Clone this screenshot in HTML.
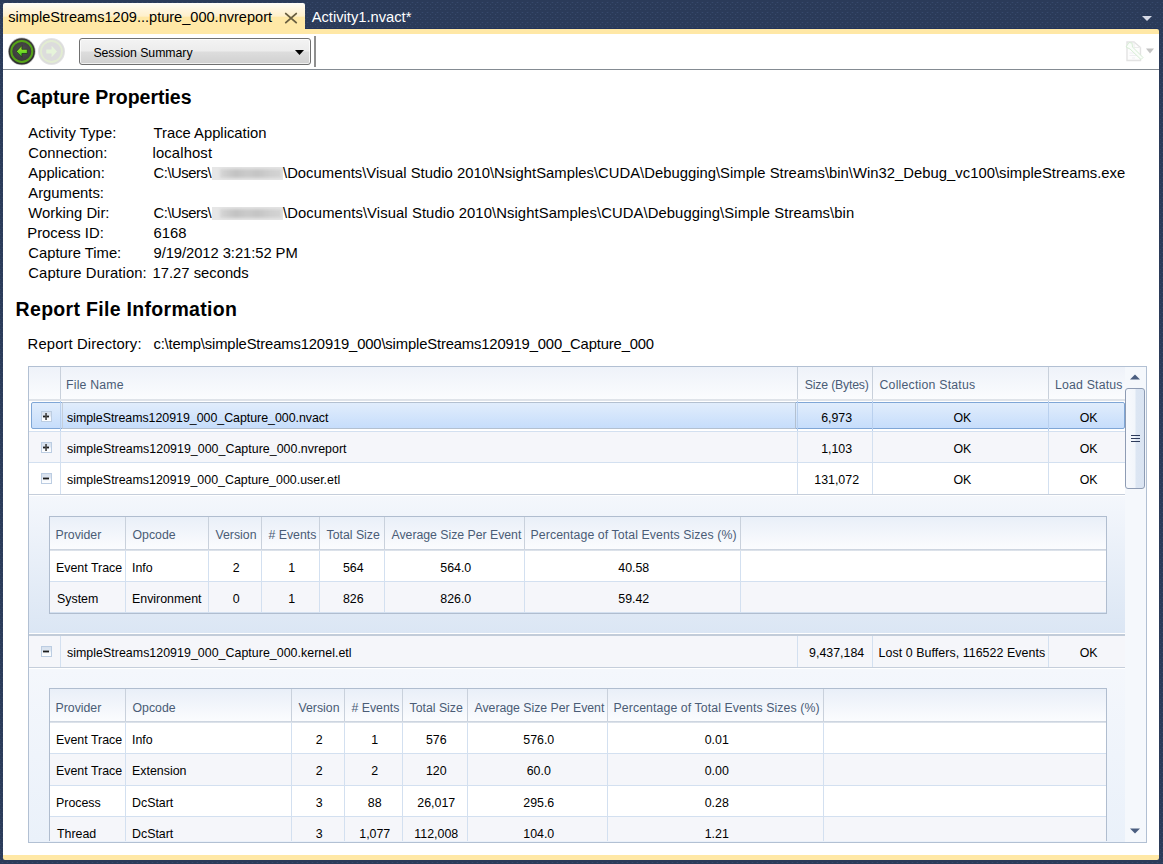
<!DOCTYPE html><html><head><meta charset="utf-8"><style>
*{margin:0;padding:0;box-sizing:border-box}
html,body{width:1163px;height:864px;overflow:hidden}
body{position:relative;font-family:"Liberation Sans",sans-serif;
background-color:#2c3c5b}
.t{position:absolute;white-space:nowrap;line-height:1}
.r{position:absolute}
</style></head><body>
<svg class="r" style="left:0;top:0" width="1163" height="864"><defs><pattern id="nv" x="0" y="0" width="5" height="5" patternUnits="userSpaceOnUse"><rect width="5" height="5" fill="#2b3b59"/><rect x="2" y="2" width="1" height="1" fill="#37496b"/><rect x="0" y="4" width="1" height="1" fill="#37496b"/><rect x="1" y="2" width="1" height="1" fill="#2e3e5e"/><rect x="3" y="2" width="1" height="1" fill="#2e3e5e"/></pattern></defs><rect width="1163" height="864" fill="url(#nv)"/></svg>
<div class="r" style="left:3px;top:28px;width:1156px;height:1px;background:#233459"></div>
<div class="r" style="left:3px;top:3px;width:302px;height:27px;border-radius:2px 2px 0 0;background:linear-gradient(#fffdf7 0px,#fff6e0 6px,#fff0cc 13px,#ffe8a6 14.5px,#ffe8a6 27px)"></div>
<div class="r" style="left:3px;top:29px;width:1156px;height:6px;background:#ffe8a6;border-radius:0 2px 0 0"></div>
<div class="t" style="left:8.25px;top:9.92px;font-size:14.55px;color:#000;letter-spacing:0.005px;">simpleStreams1209...pture_000.nvreport</div>
<svg class="r" style="left:284px;top:12px" width="14" height="12" viewBox="0 0 14 12"><path d="M1.8 1.6 L12.2 10.6 M12.2 1.6 L1.8 10.6" stroke="#6a5f40" stroke-width="1.9" stroke-linecap="round"/></svg>
<div class="t" style="left:311.70px;top:9.75px;font-size:14.75px;color:#fff;letter-spacing:-0.018px;">Activity1.nvact*</div>
<svg class="r" style="left:1141px;top:15px" width="12" height="7"><path d="M1 1 L11 1 L6 6 Z" fill="#d6dae6"/></svg>
<div class="r" style="left:3px;top:34px;width:1156px;height:821px;background:#fff"></div>
<div class="r" style="left:3px;top:855px;width:1156px;height:5px;background:#ffe8a6;border-radius:0 0 2px 2px"></div>
<div class="r" style="left:3px;top:69px;width:1156px;height:1px;background:#848b92"></div>
<svg class="r" style="left:7px;top:37px" width="30" height="30" viewBox="0 0 30 30">
<defs><radialGradient id="bg1" cx="50%" cy="45%" r="55%"><stop offset="0" stop-color="#505050"/><stop offset="0.75" stop-color="#3a3a3a"/><stop offset="1" stop-color="#2c2c2c"/></radialGradient>
<linearGradient id="ar1" x1="0" y1="0" x2="0" y2="1"><stop offset="0" stop-color="#b6ee30"/><stop offset="1" stop-color="#30c41c"/></linearGradient></defs>
<circle cx="14.8" cy="14.4" r="13.8" fill="#6a6a6a" opacity="0.45"/>
<circle cx="14.8" cy="14.4" r="13.1" fill="url(#bg1)"/>
<circle cx="14.8" cy="14.4" r="10.5" fill="none" stroke="#55a317" stroke-width="2"/>
<path d="M9.4 14.4 L14.9 8.6 L14.9 12.3 L20.3 12.3 L20.3 16.5 L14.9 16.5 L14.9 20.2 Z" fill="url(#ar1)" stroke="#183414" stroke-width="0.7"/>
</svg>
<svg class="r" style="left:37px;top:37px" width="30" height="30" viewBox="0 0 30 30">
<circle cx="14.5" cy="14.5" r="13.5" fill="#e4e4e4"/>
<circle cx="14.5" cy="14.5" r="12.6" fill="#dcdcdc"/>
<circle cx="14.5" cy="14.5" r="10.5" fill="none" stroke="#e2ecd2" stroke-width="1.8"/>
<path d="M20 14.5 L14.6 8.8 L14.6 12.5 L9.3 12.5 L9.3 16.5 L14.6 16.5 L14.6 20.2 Z" fill="#e6f4da"/>
</svg>
<div class="r" style="left:79px;top:38px;width:232px;height:27px;border:1px solid #707070;border-radius:3px;background:linear-gradient(#f3f3f3 0px,#ececec 12px,#dddddd 13px,#d0d0d0 25px);box-shadow:inset 0 0 0 1px rgba(255,255,255,0.7)"></div>
<div class="t" style="left:93.40px;top:46.97px;font-size:12.32px;color:#000;letter-spacing:-0.053px;">Session Summary</div>
<svg class="r" style="left:294px;top:49px" width="12" height="8"><path d="M1 1 L10 1 L5.5 6 Z" fill="#000"/></svg>
<div class="r" style="left:314px;top:36px;width:2px;height:31px;background:#8f8f8f;width:1.5px"></div>
<svg class="r" style="left:1122px;top:38px" width="36" height="26" viewBox="0 0 36 26">
<path d="M5 4 L12 4 L18.5 9.5 L18.5 22.5 L5 22.5 Z" fill="#fdfdfd" stroke="#e3e3e3" stroke-width="1.4"/>
<path d="M12 4 L12 9.5 L18.5 9.5" fill="none" stroke="#ececec" stroke-width="1"/>
<path d="M7.5 15 L13 15 M7.5 17.5 L15 17.5 M10 20 L13 20" stroke="#efeff3" stroke-width="1"/>
<path d="M4 9 L7 4.5 L10 5 L10.5 9 L21 19.5 L19 21.5 L8 11 Z" fill="#fafdfa" stroke="#d7edd5" stroke-width="1"/>
<path d="M24 10.5 L32 10.5 L28 15.5 Z" fill="#c2c2c2"/>
</svg>
<div class="t" style="left:16.20px;top:88.01px;font-size:19.5px;color:#000;font-weight:bold;letter-spacing:-0.012px;">Capture Properties</div>
<div class="t" style="left:28.30px;top:125.71px;font-size:14.8px;color:#000;letter-spacing:0.088px;">Activity Type:</div>
<div class="t" style="left:153.50px;top:125.71px;font-size:14.8px;color:#000;letter-spacing:-0.003px;">Trace Application</div>
<div class="t" style="left:28.30px;top:145.71px;font-size:14.8px;color:#000;">Connection:</div>
<div class="t" style="left:152.50px;top:145.71px;font-size:14.8px;color:#000;letter-spacing:0.139px;">localhost</div>
<div class="t" style="left:28.30px;top:165.71px;font-size:14.8px;color:#000;">Application:</div>
<div class="t" style="left:153.50px;top:165.71px;font-size:14.8px;color:#000;letter-spacing:-0.443px;">C:\Users\</div>
<div class="r" style="left:212px;top:167.2px;width:71px;height:12.5px;overflow:hidden;background:#e6e6e6"><div class="r" style="left:8px;top:2px;width:62px;height:9px;background:linear-gradient(90deg,#d6d6d6,#c2c2c2 25%,#cacaca 45%,#c4c4c4 60%,#cecece 80%,#d4d4d4);filter:blur(1.5px)"></div></div>
<div class="t" style="left:283.00px;top:165.71px;font-size:14.8px;color:#000;letter-spacing:0.025px;">\Documents\Visual Studio 2010\NsightSamples\CUDA\Debugging\Simple Streams\bin\Win32_Debug_vc100\simpleStreams.exe</div>
<div class="t" style="left:28.30px;top:185.71px;font-size:14.8px;color:#000;">Arguments:</div>
<div class="t" style="left:28.30px;top:205.71px;font-size:14.8px;color:#000;">Working Dir:</div>
<div class="t" style="left:153.50px;top:205.71px;font-size:14.8px;color:#000;letter-spacing:-0.443px;">C:\Users\</div>
<div class="r" style="left:212px;top:207.2px;width:71px;height:12.5px;overflow:hidden;background:#e6e6e6"><div class="r" style="left:8px;top:2px;width:62px;height:9px;background:linear-gradient(90deg,#d6d6d6,#c2c2c2 25%,#cacaca 45%,#c4c4c4 60%,#cecece 80%,#d4d4d4);filter:blur(1.5px)"></div></div>
<div class="t" style="left:283.00px;top:205.71px;font-size:14.8px;color:#000;letter-spacing:0.096px;">\Documents\Visual Studio 2010\NsightSamples\CUDA\Debugging\Simple Streams\bin</div>
<div class="t" style="left:27.30px;top:225.71px;font-size:14.8px;color:#000;">Process ID:</div>
<div class="t" style="left:153.50px;top:225.71px;font-size:14.8px;color:#000;">6168</div>
<div class="t" style="left:28.30px;top:245.71px;font-size:14.8px;color:#000;">Capture Time:</div>
<div class="t" style="left:153.50px;top:245.71px;font-size:14.8px;color:#000;letter-spacing:-0.073px;">9/19/2012 3:21:52 PM</div>
<div class="t" style="left:28.30px;top:265.71px;font-size:14.8px;color:#000;letter-spacing:0.101px;">Capture Duration:</div>
<div class="t" style="left:152.50px;top:265.71px;font-size:14.8px;color:#000;">17.27 seconds</div>
<div class="t" style="left:15.60px;top:300.01px;font-size:19.5px;color:#000;font-weight:bold;letter-spacing:0.310px;">Report File Information</div>
<div class="t" style="left:27.60px;top:336.51px;font-size:14.8px;color:#000;letter-spacing:0.130px;">Report Directory:</div>
<div class="t" style="left:153.40px;top:336.51px;font-size:14.8px;color:#000;letter-spacing:-0.153px;">c:\temp\simpleStreams120919_000\simpleStreams120919_000_Capture_000</div>
<div class="r" style="left:28px;top:366px;width:1119px;height:477px;border:1px solid #b2c0d3;background:#f5f8fc"></div>
<div class="r" style="left:29px;top:367px;width:1096px;height:32px;background:linear-gradient(#eef2f9,#fbfcfe)"></div>
<div class="r" style="left:29px;top:399px;width:1096px;height:2px;background:#dfe3e9"></div>
<div class="r" style="left:60px;top:367px;width:1px;height:32px;background:#c8d0db"></div>
<div class="r" style="left:797px;top:367px;width:1px;height:32px;background:#c8d0db"></div>
<div class="r" style="left:872px;top:367px;width:1px;height:32px;background:#c8d0db"></div>
<div class="r" style="left:1048px;top:367px;width:1px;height:32px;background:#c8d0db"></div>
<div class="t" style="left:66.10px;top:378.78px;font-size:12.3px;color:#4a5c76;letter-spacing:0.176px;">File Name</div>
<div class="t" style="left:804.80px;top:378.78px;font-size:12.3px;color:#4a5c76;letter-spacing:-0.199px;">Size (Bytes)</div>
<div class="t" style="left:879.50px;top:378.78px;font-size:12.3px;color:#4a5c76;letter-spacing:0.211px;">Collection Status</div>
<div class="t" style="left:1055.00px;top:378.78px;font-size:12.3px;color:#4a5c76;letter-spacing:0.181px;">Load Status</div>
<div class="r" style="left:29px;top:401px;width:1096px;height:30px;background:#ffffff"></div>
<div class="r" style="left:29px;top:431px;width:1096px;height:1px;background:#d3e0f0"></div>
<div class="r" style="left:31px;top:402px;width:1094px;height:27px;border:1px solid #7fa6d6;border-radius:2px;background:linear-gradient(#e1edfc,#c6ddfb)"></div>
<div class="r" style="left:62px;top:402px;width:734px;height:27px;border:1px solid #b3c0d0;border-left-color:#c5ced9;background:linear-gradient(#e1edfc,#c6ddfb)"></div>
<div class="r" style="left:60px;top:401px;width:1px;height:30px;background:#b9d0ee"></div>
<div class="r" style="left:797px;top:401px;width:1px;height:30px;background:#b9d0ee"></div>
<div class="r" style="left:872px;top:401px;width:1px;height:30px;background:#b9d0ee"></div>
<div class="r" style="left:1048px;top:401px;width:1px;height:30px;background:#b9d0ee"></div>
<div class="t" style="left:67.00px;top:411.70px;font-size:12.4px;color:#000;letter-spacing:-0.025px;">simpleStreams120919_000_Capture_000.nvact</div>
<div class="t" style="left:821.14px;top:411.70px;font-size:12.4px;color:#000;">6,973</div>
<div class="t" style="left:953.48px;top:411.70px;font-size:12.4px;color:#000;">OK</div>
<div class="t" style="left:1079.68px;top:411.70px;font-size:12.4px;color:#000;">OK</div>
<svg class="r" style="left:41px;top:411px" width="11" height="11" viewBox="0 0 11 11"><defs><linearGradient id="eg" x1="0" y1="0" x2="0" y2="1"><stop offset="0" stop-color="#d6e0ed"/><stop offset="0.45" stop-color="#dfe7f2"/><stop offset="0.55" stop-color="#f3f7fc"/><stop offset="1" stop-color="#ffffff"/></linearGradient></defs><rect x="0.5" y="0.5" width="10" height="10" fill="url(#eg)" stroke="#bccde2" stroke-width="1"/><rect x="2" y="4.6" width="6" height="1.8" fill="#1c1c1c"/><rect x="4.2" y="2" width="1.7" height="7" fill="#4a4a4a"/></svg>
<div class="r" style="left:29px;top:432px;width:1096px;height:30px;background:#f5f6fa"></div>
<div class="r" style="left:29px;top:462px;width:1096px;height:1px;background:#d3e0f0"></div>
<div class="r" style="left:60px;top:432px;width:1px;height:30px;background:#d3e0f0"></div>
<div class="r" style="left:797px;top:432px;width:1px;height:30px;background:#d3e0f0"></div>
<div class="r" style="left:872px;top:432px;width:1px;height:30px;background:#d3e0f0"></div>
<div class="r" style="left:1048px;top:432px;width:1px;height:30px;background:#d3e0f0"></div>
<div class="t" style="left:67.00px;top:442.70px;font-size:12.4px;color:#000;letter-spacing:0.029px;">simpleStreams120919_000_Capture_000.nvreport</div>
<div class="t" style="left:821.14px;top:442.70px;font-size:12.4px;color:#000;">1,103</div>
<div class="t" style="left:953.48px;top:442.70px;font-size:12.4px;color:#000;">OK</div>
<div class="t" style="left:1079.68px;top:442.70px;font-size:12.4px;color:#000;">OK</div>
<svg class="r" style="left:41px;top:442px" width="11" height="11" viewBox="0 0 11 11"><defs><linearGradient id="eg" x1="0" y1="0" x2="0" y2="1"><stop offset="0" stop-color="#d6e0ed"/><stop offset="0.45" stop-color="#dfe7f2"/><stop offset="0.55" stop-color="#f3f7fc"/><stop offset="1" stop-color="#ffffff"/></linearGradient></defs><rect x="0.5" y="0.5" width="10" height="10" fill="url(#eg)" stroke="#bccde2" stroke-width="1"/><rect x="2" y="4.6" width="6" height="1.8" fill="#1c1c1c"/><rect x="4.2" y="2" width="1.7" height="7" fill="#4a4a4a"/></svg>
<div class="r" style="left:29px;top:463px;width:1096px;height:31px;background:#ffffff"></div>
<div class="r" style="left:29px;top:494px;width:1096px;height:1px;background:#c5cedb"></div>
<div class="r" style="left:60px;top:463px;width:1px;height:31px;background:#d3e0f0"></div>
<div class="r" style="left:797px;top:463px;width:1px;height:31px;background:#d3e0f0"></div>
<div class="r" style="left:872px;top:463px;width:1px;height:31px;background:#d3e0f0"></div>
<div class="r" style="left:1048px;top:463px;width:1px;height:31px;background:#d3e0f0"></div>
<div class="t" style="left:67.00px;top:473.70px;font-size:12.4px;color:#000;letter-spacing:0.009px;">simpleStreams120919_000_Capture_000.user.etl</div>
<div class="t" style="left:814.25px;top:473.70px;font-size:12.4px;color:#000;">131,072</div>
<div class="t" style="left:953.48px;top:473.70px;font-size:12.4px;color:#000;">OK</div>
<div class="t" style="left:1079.68px;top:473.70px;font-size:12.4px;color:#000;">OK</div>
<svg class="r" style="left:41px;top:473px" width="11" height="11" viewBox="0 0 11 11"><defs><linearGradient id="eg" x1="0" y1="0" x2="0" y2="1"><stop offset="0" stop-color="#d6e0ed"/><stop offset="0.45" stop-color="#dfe7f2"/><stop offset="0.55" stop-color="#f3f7fc"/><stop offset="1" stop-color="#ffffff"/></linearGradient></defs><rect x="0.5" y="0.5" width="10" height="10" fill="url(#eg)" stroke="#bccde2" stroke-width="1"/><rect x="2" y="4.6" width="6" height="1.8" fill="#1c1c1c"/></svg>
<div class="r" style="left:29px;top:495px;width:1096px;height:1px;background:#ffffff"></div>
<div class="r" style="left:29px;top:496px;width:1096px;height:137px;background:linear-gradient(#f4f7fc,#dbe6f4)"></div>
<div class="r" style="left:29px;top:633px;width:1096px;height:1px;background:#ffffff"></div>
<div class="r" style="left:29px;top:634px;width:1096px;height:2px;background:#c2ccd9"></div>
<div class="r" style="left:49px;top:516px;width:1058px;height:98px;border:1px solid #b0bdcf;background:#fff;"></div>
<div class="r" style="left:50px;top:517px;width:1056px;height:32px;background:linear-gradient(#e9eff8,#fbfcfe)"></div>
<div class="r" style="left:50px;top:549px;width:1056px;height:2px;background:linear-gradient(#c6cfdb,#e3e8ee)"></div>
<div class="r" style="left:125px;top:517px;width:1px;height:32px;background:#c9d1dc"></div>
<div class="r" style="left:208px;top:517px;width:1px;height:32px;background:#c9d1dc"></div>
<div class="r" style="left:261px;top:517px;width:1px;height:32px;background:#c9d1dc"></div>
<div class="r" style="left:319px;top:517px;width:1px;height:32px;background:#c9d1dc"></div>
<div class="r" style="left:384px;top:517px;width:1px;height:32px;background:#c9d1dc"></div>
<div class="r" style="left:524px;top:517px;width:1px;height:32px;background:#c9d1dc"></div>
<div class="r" style="left:740px;top:517px;width:1px;height:32px;background:#c9d1dc"></div>
<div class="t" style="left:55.50px;top:528.58px;font-size:12.3px;color:#4a5c76;">Provider</div>
<div class="t" style="left:132.50px;top:528.58px;font-size:12.3px;color:#4a5c76;">Opcode</div>
<div class="t" style="left:215.50px;top:528.58px;font-size:12.3px;color:#4a5c76;">Version</div>
<div class="t" style="left:268.50px;top:528.58px;font-size:12.3px;color:#4a5c76;"># Events</div>
<div class="t" style="left:326.50px;top:528.58px;font-size:12.3px;color:#4a5c76;">Total Size</div>
<div class="t" style="left:391.50px;top:528.58px;font-size:12.3px;color:#4a5c76;letter-spacing:-0.024px;">Average Size Per Event</div>
<div class="t" style="left:530.50px;top:528.58px;font-size:12.3px;color:#4a5c76;letter-spacing:0.094px;">Percentage of Total Events Sizes (%)</div>
<div class="r" style="left:50px;top:551px;width:1056px;height:30px;background:#ffffff"></div>
<div class="r" style="left:50px;top:581px;width:1056px;height:1px;background:#d3e0f0"></div>
<div class="r" style="left:125px;top:551px;width:1px;height:31px;background:#d3e0f0"></div>
<div class="r" style="left:208px;top:551px;width:1px;height:31px;background:#d3e0f0"></div>
<div class="r" style="left:261px;top:551px;width:1px;height:31px;background:#d3e0f0"></div>
<div class="r" style="left:319px;top:551px;width:1px;height:31px;background:#d3e0f0"></div>
<div class="r" style="left:384px;top:551px;width:1px;height:31px;background:#d3e0f0"></div>
<div class="r" style="left:524px;top:551px;width:1px;height:31px;background:#d3e0f0"></div>
<div class="r" style="left:740px;top:551px;width:1px;height:31px;background:#d3e0f0"></div>
<div class="t" style="left:56.00px;top:561.70px;font-size:12.4px;color:#000;">Event Trace</div>
<div class="t" style="left:132.00px;top:561.70px;font-size:12.4px;color:#000;">Info</div>
<div class="t" style="left:232.80px;top:561.70px;font-size:12.4px;color:#000;">2</div>
<div class="t" style="left:288.30px;top:561.70px;font-size:12.4px;color:#000;">1</div>
<div class="t" style="left:342.91px;top:561.70px;font-size:12.4px;color:#000;">564</div>
<div class="t" style="left:440.24px;top:561.70px;font-size:12.4px;color:#000;">564.0</div>
<div class="t" style="left:618.24px;top:561.70px;font-size:12.4px;color:#000;">40.58</div>
<div class="r" style="left:50px;top:582px;width:1056px;height:30px;background:#f5f6fa"></div>
<div class="r" style="left:50px;top:612px;width:1056px;height:1px;background:#d3e0f0"></div>
<div class="r" style="left:125px;top:582px;width:1px;height:31px;background:#d3e0f0"></div>
<div class="r" style="left:208px;top:582px;width:1px;height:31px;background:#d3e0f0"></div>
<div class="r" style="left:261px;top:582px;width:1px;height:31px;background:#d3e0f0"></div>
<div class="r" style="left:319px;top:582px;width:1px;height:31px;background:#d3e0f0"></div>
<div class="r" style="left:384px;top:582px;width:1px;height:31px;background:#d3e0f0"></div>
<div class="r" style="left:524px;top:582px;width:1px;height:31px;background:#d3e0f0"></div>
<div class="r" style="left:740px;top:582px;width:1px;height:31px;background:#d3e0f0"></div>
<div class="t" style="left:57.00px;top:592.70px;font-size:12.4px;color:#000;">System</div>
<div class="t" style="left:132.00px;top:592.70px;font-size:12.4px;color:#000;">Environment</div>
<div class="t" style="left:232.80px;top:592.70px;font-size:12.4px;color:#000;">0</div>
<div class="t" style="left:288.30px;top:592.70px;font-size:12.4px;color:#000;">1</div>
<div class="t" style="left:342.91px;top:592.70px;font-size:12.4px;color:#000;">826</div>
<div class="t" style="left:440.24px;top:592.70px;font-size:12.4px;color:#000;">826.0</div>
<div class="t" style="left:618.24px;top:592.70px;font-size:12.4px;color:#000;">59.42</div>
<div class="r" style="left:29px;top:636px;width:1096px;height:31px;background:#f5f6fa"></div>
<div class="r" style="left:29px;top:667px;width:1096px;height:1px;background:#c5cedb"></div>
<div class="r" style="left:60px;top:636px;width:1px;height:31px;background:#d3e0f0"></div>
<div class="r" style="left:797px;top:636px;width:1px;height:31px;background:#d3e0f0"></div>
<div class="r" style="left:872px;top:636px;width:1px;height:31px;background:#d3e0f0"></div>
<div class="r" style="left:1048px;top:636px;width:1px;height:31px;background:#d3e0f0"></div>
<div class="t" style="left:67.00px;top:646.70px;font-size:12.4px;color:#000;letter-spacing:0.032px;">simpleStreams120919_000_Capture_000.kernel.etl</div>
<div class="t" style="left:809.08px;top:646.70px;font-size:12.4px;color:#000;">9,437,184</div>
<div class="t" style="left:878.50px;top:646.70px;font-size:12.4px;color:#000;letter-spacing:0.066px;">Lost 0 Buffers, 116522 Events</div>
<div class="t" style="left:1079.68px;top:646.70px;font-size:12.4px;color:#000;">OK</div>
<svg class="r" style="left:41px;top:646px" width="11" height="11" viewBox="0 0 11 11"><defs><linearGradient id="eg" x1="0" y1="0" x2="0" y2="1"><stop offset="0" stop-color="#d6e0ed"/><stop offset="0.45" stop-color="#dfe7f2"/><stop offset="0.55" stop-color="#f3f7fc"/><stop offset="1" stop-color="#ffffff"/></linearGradient></defs><rect x="0.5" y="0.5" width="10" height="10" fill="url(#eg)" stroke="#bccde2" stroke-width="1"/><rect x="2" y="4.6" width="6" height="1.8" fill="#1c1c1c"/></svg>
<div class="r" style="left:29px;top:668px;width:1096px;height:1px;background:#ffffff"></div>
<div class="r" style="left:29px;top:669px;width:1096px;height:173px;background:linear-gradient(#f4f7fc,#eaf1fa)"></div>
<div class="r" style="left:49px;top:688px;width:1058px;height:153px;border:1px solid #b0bdcf;background:#fff;border-bottom:none;"></div>
<div class="r" style="left:50px;top:689px;width:1056px;height:32px;background:linear-gradient(#e9eff8,#fbfcfe)"></div>
<div class="r" style="left:50px;top:721px;width:1056px;height:2px;background:linear-gradient(#c6cfdb,#e3e8ee)"></div>
<div class="r" style="left:125px;top:689px;width:1px;height:32px;background:#c9d1dc"></div>
<div class="r" style="left:291px;top:689px;width:1px;height:32px;background:#c9d1dc"></div>
<div class="r" style="left:344px;top:689px;width:1px;height:32px;background:#c9d1dc"></div>
<div class="r" style="left:402px;top:689px;width:1px;height:32px;background:#c9d1dc"></div>
<div class="r" style="left:467px;top:689px;width:1px;height:32px;background:#c9d1dc"></div>
<div class="r" style="left:607px;top:689px;width:1px;height:32px;background:#c9d1dc"></div>
<div class="r" style="left:823px;top:689px;width:1px;height:32px;background:#c9d1dc"></div>
<div class="t" style="left:55.50px;top:702.28px;font-size:12.3px;color:#4a5c76;">Provider</div>
<div class="t" style="left:132.50px;top:702.28px;font-size:12.3px;color:#4a5c76;">Opcode</div>
<div class="t" style="left:298.50px;top:702.28px;font-size:12.3px;color:#4a5c76;">Version</div>
<div class="t" style="left:351.50px;top:702.28px;font-size:12.3px;color:#4a5c76;"># Events</div>
<div class="t" style="left:409.50px;top:702.28px;font-size:12.3px;color:#4a5c76;">Total Size</div>
<div class="t" style="left:474.50px;top:702.28px;font-size:12.3px;color:#4a5c76;letter-spacing:-0.024px;">Average Size Per Event</div>
<div class="t" style="left:613.50px;top:702.28px;font-size:12.3px;color:#4a5c76;letter-spacing:0.094px;">Percentage of Total Events Sizes (%)</div>
<div class="r" style="left:50px;top:723px;width:1056px;height:30px;background:#ffffff"></div>
<div class="r" style="left:50px;top:753px;width:1056px;height:1px;background:#d3e0f0"></div>
<div class="r" style="left:125px;top:723px;width:1px;height:31px;background:#d3e0f0"></div>
<div class="r" style="left:291px;top:723px;width:1px;height:31px;background:#d3e0f0"></div>
<div class="r" style="left:344px;top:723px;width:1px;height:31px;background:#d3e0f0"></div>
<div class="r" style="left:402px;top:723px;width:1px;height:31px;background:#d3e0f0"></div>
<div class="r" style="left:467px;top:723px;width:1px;height:31px;background:#d3e0f0"></div>
<div class="r" style="left:607px;top:723px;width:1px;height:31px;background:#d3e0f0"></div>
<div class="r" style="left:823px;top:723px;width:1px;height:31px;background:#d3e0f0"></div>
<div class="t" style="left:56.00px;top:733.70px;font-size:12.4px;color:#000;">Event Trace</div>
<div class="t" style="left:132.00px;top:733.70px;font-size:12.4px;color:#000;">Info</div>
<div class="t" style="left:315.80px;top:733.70px;font-size:12.4px;color:#000;">2</div>
<div class="t" style="left:371.30px;top:733.70px;font-size:12.4px;color:#000;">1</div>
<div class="t" style="left:425.91px;top:733.70px;font-size:12.4px;color:#000;">576</div>
<div class="t" style="left:523.24px;top:733.70px;font-size:12.4px;color:#000;">576.0</div>
<div class="t" style="left:704.69px;top:733.70px;font-size:12.4px;color:#000;">0.01</div>
<div class="r" style="left:50px;top:754px;width:1056px;height:31px;background:#f5f6fa"></div>
<div class="r" style="left:50px;top:785px;width:1056px;height:1px;background:#d3e0f0"></div>
<div class="r" style="left:125px;top:754px;width:1px;height:32px;background:#d3e0f0"></div>
<div class="r" style="left:291px;top:754px;width:1px;height:32px;background:#d3e0f0"></div>
<div class="r" style="left:344px;top:754px;width:1px;height:32px;background:#d3e0f0"></div>
<div class="r" style="left:402px;top:754px;width:1px;height:32px;background:#d3e0f0"></div>
<div class="r" style="left:467px;top:754px;width:1px;height:32px;background:#d3e0f0"></div>
<div class="r" style="left:607px;top:754px;width:1px;height:32px;background:#d3e0f0"></div>
<div class="r" style="left:823px;top:754px;width:1px;height:32px;background:#d3e0f0"></div>
<div class="t" style="left:56.00px;top:764.70px;font-size:12.4px;color:#000;">Event Trace</div>
<div class="t" style="left:132.00px;top:764.70px;font-size:12.4px;color:#000;">Extension</div>
<div class="t" style="left:315.80px;top:764.70px;font-size:12.4px;color:#000;">2</div>
<div class="t" style="left:371.30px;top:764.70px;font-size:12.4px;color:#000;">2</div>
<div class="t" style="left:425.91px;top:764.70px;font-size:12.4px;color:#000;">120</div>
<div class="t" style="left:526.69px;top:764.70px;font-size:12.4px;color:#000;">60.0</div>
<div class="t" style="left:704.69px;top:764.70px;font-size:12.4px;color:#000;">0.00</div>
<div class="r" style="left:50px;top:786px;width:1056px;height:30px;background:#ffffff"></div>
<div class="r" style="left:50px;top:816px;width:1056px;height:1px;background:#d3e0f0"></div>
<div class="r" style="left:125px;top:786px;width:1px;height:31px;background:#d3e0f0"></div>
<div class="r" style="left:291px;top:786px;width:1px;height:31px;background:#d3e0f0"></div>
<div class="r" style="left:344px;top:786px;width:1px;height:31px;background:#d3e0f0"></div>
<div class="r" style="left:402px;top:786px;width:1px;height:31px;background:#d3e0f0"></div>
<div class="r" style="left:467px;top:786px;width:1px;height:31px;background:#d3e0f0"></div>
<div class="r" style="left:607px;top:786px;width:1px;height:31px;background:#d3e0f0"></div>
<div class="r" style="left:823px;top:786px;width:1px;height:31px;background:#d3e0f0"></div>
<div class="t" style="left:56.00px;top:796.70px;font-size:12.4px;color:#000;">Process</div>
<div class="t" style="left:132.00px;top:796.70px;font-size:12.4px;color:#000;">DcStart</div>
<div class="t" style="left:315.80px;top:796.70px;font-size:12.4px;color:#000;">3</div>
<div class="t" style="left:367.85px;top:796.70px;font-size:12.4px;color:#000;">88</div>
<div class="t" style="left:417.30px;top:796.70px;font-size:12.4px;color:#000;">26,017</div>
<div class="t" style="left:523.24px;top:796.70px;font-size:12.4px;color:#000;">295.6</div>
<div class="t" style="left:704.69px;top:796.70px;font-size:12.4px;color:#000;">0.28</div>
<div class="r" style="left:50px;top:817px;width:1056px;height:24px;background:#f5f6fa"></div>
<div class="r" style="left:125px;top:817px;width:1px;height:24px;background:#d3e0f0"></div>
<div class="r" style="left:291px;top:817px;width:1px;height:24px;background:#d3e0f0"></div>
<div class="r" style="left:344px;top:817px;width:1px;height:24px;background:#d3e0f0"></div>
<div class="r" style="left:402px;top:817px;width:1px;height:24px;background:#d3e0f0"></div>
<div class="r" style="left:467px;top:817px;width:1px;height:24px;background:#d3e0f0"></div>
<div class="r" style="left:607px;top:817px;width:1px;height:24px;background:#d3e0f0"></div>
<div class="r" style="left:823px;top:817px;width:1px;height:24px;background:#d3e0f0"></div>
<div class="t" style="left:57.00px;top:827.70px;font-size:12.4px;color:#000;">Thread</div>
<div class="t" style="left:132.00px;top:827.70px;font-size:12.4px;color:#000;">DcStart</div>
<div class="t" style="left:315.80px;top:827.70px;font-size:12.4px;color:#000;">3</div>
<div class="t" style="left:359.24px;top:827.70px;font-size:12.4px;color:#000;">1,077</div>
<div class="t" style="left:414.31px;top:827.70px;font-size:12.4px;color:#000;">112,008</div>
<div class="t" style="left:523.24px;top:827.70px;font-size:12.4px;color:#000;">104.0</div>
<div class="t" style="left:704.69px;top:827.70px;font-size:12.4px;color:#000;">1.21</div>
<div class="r" style="left:1125px;top:367px;width:21px;height:475px;background:#f5f8fc"></div>
<svg class="r" style="left:1129px;top:373px" width="12" height="8"><path d="M1 6.5 L11 6.5 L6 1.5 Z" fill="#4b5e80"/></svg>
<div class="r" style="left:1125px;top:388px;width:20px;height:101px;border:1px solid #8e9cb4;border-radius:3px;background:linear-gradient(90deg,#f7f9fd 0,#f2f6fb 9px,#dce6f3 10px,#dae4f2 100%)"></div>
<div class="r" style="left:1131px;top:435px;width:9px;height:1.3px;background:#2e3c5c"></div>
<div class="r" style="left:1131px;top:438px;width:9px;height:1.3px;background:#2e3c5c"></div>
<div class="r" style="left:1131px;top:441px;width:9px;height:1.3px;background:#2e3c5c"></div>
<svg class="r" style="left:1129px;top:827px" width="12" height="8"><path d="M1 1.5 L11 1.5 L6 6.5 Z" fill="#4b5e80"/></svg>
</body></html>
